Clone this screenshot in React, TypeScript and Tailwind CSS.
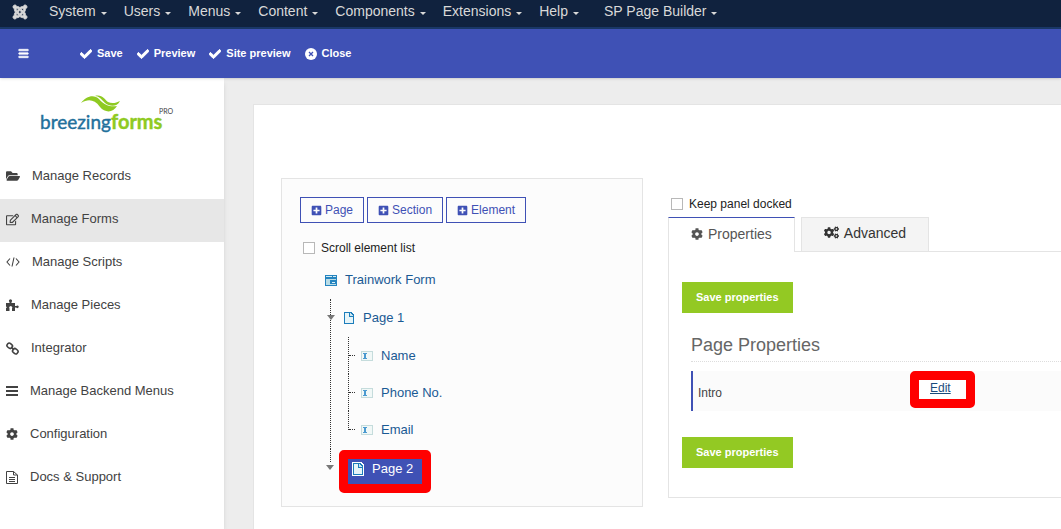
import type { ReactNode } from "react";
import {
  FaBars,
  FaCheck,
  FaCog,
  FaCogs,
  FaFolderOpen,
  FaJoomla,
  FaPlusSquare,
  FaRegEdit,
} from "react-icons/fa";

const menuItems = ["System", "Users", "Menus", "Content", "Components", "Extensions", "Help"];

function Caret() {
  return <span className="mt-1 border-x-[3px] border-t-[3px] border-x-transparent border-t-[#d9d9d9]" />;
}

function TopNav() {
  return (
    <nav className="flex h-[29px] items-start border-b-2 border-[#1a3867] bg-[#10223e] pl-3 text-sm text-[#d9d9d9]">
      <a href="#home" aria-label="Home" className="mt-1 mr-[21px]">
        <FaJoomla size={16} stroke="currentColor" strokeWidth={28} />
      </a>
      <div className="flex gap-[17px] leading-[22px]">
        {menuItems.map((item) => (
          <a key={item} href="#menu" className="flex items-center gap-[5px]">
            {item}
            <Caret />
          </a>
        ))}
        <a href="#builder" className="ml-2 flex items-center gap-[5px]">
          SP Page Builder
          <Caret />
        </a>
      </div>
    </nav>
  );
}

function CloseIcon() {
  return (
    <svg width="12" height="12" viewBox="0 0 12 12">
      <circle cx="6" cy="6" r="6" fill="#fff" />
      <path d="M4 4l4 4M8 4l-4 4" stroke="#3f51b5" strokeWidth="1.3" />
    </svg>
  );
}

function Toolbar() {
  return (
    <div className="relative z-10 flex h-[49px] items-center bg-[#3f51b5] pl-[18px] text-[11px] font-bold text-white shadow">
      <button type="button" aria-label="Toggle menu" className="mr-[51px]">
        <FaBars size={11} stroke="currentColor" strokeWidth={30} />
      </button>
      <div className="flex gap-[14px]">
        {["Save", "Preview", "Site preview"].map((label) => (
          <button key={label} type="button" className="flex items-center gap-[5px]">
            <FaCheck size={12} stroke="currentColor" strokeWidth={40} />
            {label}
          </button>
        ))}
        <button type="button" className="flex items-center gap-[5px]">
          <CloseIcon />
          Close
        </button>
      </div>
    </div>
  );
}

function Logo() {
  return (
    <svg
      viewBox="0 0 136 42"
      className="ml-[39px] h-[42px] w-[136px]"
      role="img"
      aria-label="BreezingForms Pro"
    >
      <path d="M42 8C47 1 55-1 60 4C66 11 72 12 78 11C74 18 66 18 61 12C55 4 49 4 42 8Z" fill="#8fca22" />
      <path d="M56 1C63-1 66 5 69 7C73 9 77 8 81 6C78 12 71 12 66 8C62 4 60 1 56 1Z" fill="#8fca22" />
      <text x="1" y="34" fontFamily="Lato, sans-serif" fontSize="19" fill="#22709b" stroke="#22709b" strokeWidth="0.4">
        breezing
      </text>
      <text x="72" y="34" fontFamily="Lato, sans-serif" fontSize="20" fontWeight="700" fill="#8fca22" stroke="#8fca22" strokeWidth="0.4">
        forms
      </text>
      <text x="120" y="19" fontFamily="Lato, sans-serif" fontSize="7" fill="#444">
        PRO
      </text>
    </svg>
  );
}

function CodeIcon() {
  return (
    <svg width="14" height="10" viewBox="0 0 14 10" fill="none" stroke="currentColor" strokeWidth="1.1">
      <path d="M4 1.5L1 5l3 3.5M10 1.5L13 5l-3 3.5M8 .5L6 9.5" />
    </svg>
  );
}

function PieceIcon() {
  return (
    <svg width="13" height="12" viewBox="0 0 13 12" fill="currentColor">
      <path d="M0 4h3.500V3a1.500 1.500 0 1 1 2 0v1H9v3h1.300a1.300 1.300 0 1 1 0 1.600H9V12H6V9.500a1.500 1.500 0 1 0-2.500 0V12H0V9l1-.8L0 7.500z" />
    </svg>
  );
}

function ChainIcon() {
  return (
    <svg width="13" height="13" viewBox="0 0 13 13" fill="none" stroke="currentColor" strokeWidth="1.6">
      <rect x="1" y="1.5" width="5.500" height="4.500" rx="2" transform="rotate(40 3.700 3.700)" />
      <rect x="6.500" y="7" width="5.500" height="4.500" rx="2" transform="rotate(40 9.300 9.300)" />
      <path d="M5 5l3 3" />
    </svg>
  );
}

function LinesIcon() {
  return (
    <svg width="12" height="10" viewBox="0 0 12 10" fill="currentColor">
      <path d="M0 0h12v2H0zM0 4h12v2H0zM0 8h12v2H0z" />
    </svg>
  );
}

function DocIcon() {
  return (
    <svg width="12" height="13" viewBox="0 0 12 13" fill="none" stroke="currentColor">
      <path d="M.5.5h7L11.5 4v8.500H.5zM7.500.5V4h4M3 6.500h6M3 8.500h6M3 10.500h6" />
    </svg>
  );
}

const sideItems: { label: string; icon: ReactNode; active?: boolean }[] = [
  { label: "Manage Records", icon: <FaFolderOpen size={14} /> },
  { label: "Manage Forms", icon: <FaRegEdit size={13} />, active: true },
  { label: "Manage Scripts", icon: <CodeIcon /> },
  { label: "Manage Pieces", icon: <PieceIcon /> },
  { label: "Integrator", icon: <ChainIcon /> },
  { label: "Manage Backend Menus", icon: <LinesIcon /> },
  { label: "Configuration", icon: <FaCog size={12} /> },
  { label: "Docs & Support", icon: <DocIcon /> },
];

function Sidebar() {
  return (
    <aside className="w-[224px] shrink-0 bg-white pt-[17px] shadow-md">
      <Logo />
      <nav className="mt-[19px]">
        {sideItems.map((item) => (
          <a
            key={item.label}
            href="#section"
            className={`flex h-[43px] items-center gap-3 pb-[3px] pl-1.5 text-[13px] text-[#424242] ${
              item.active ? "bg-[#e7e7e7]" : ""
            }`}
          >
            {item.icon}
            {item.label}
          </a>
        ))}
      </nav>
    </aside>
  );
}

function AddButton({ label }: { label: string }) {
  return (
    <button
      type="button"
      className="flex h-[26px] items-center gap-[3px] border border-[#3f51b5] px-[10px] text-xs text-[#3f51b5]"
    >
      <FaPlusSquare size={11} />
      {label}
    </button>
  );
}

function FormIcon() {
  return (
    <svg width="12" height="11" viewBox="0 0 12 11" shapeRendering="crispEdges">
      <path d="M0 0h12v11H0z" fill="#2584bf" />
      <path d="M1 1h6v1H1zM8 1h3v1H8z" fill="#d5edf5" />
      <path d="M1 4h10v6H1z" fill="#b9dce6" />
      <path d="M5 5h6v4H5z" fill="#2584bf" />
      <path d="M7 7h3v1H7z" fill="#d5edf5" />
    </svg>
  );
}

function PageIcon({ selected = false }: { selected?: boolean }) {
  return (
    <svg width="10" height="12" viewBox="0 0 10 12" shapeRendering="crispEdges" overflow="visible">
      {selected && <path d="M-1-1h9l3 3v11H-1z" fill="#fff" />}
      <path d="M0 0h7l3 3v9H0z" fill="#1c7dbb" />
      <path d="M1 1h4v4h4v6H1z" fill="#e6f4f8" />
      <path d="M6 1l3 3H6z" fill="#cde7f2" />
    </svg>
  );
}

function FieldIcon() {
  return (
    <svg width="12" height="10" viewBox="0 0 12 10" shapeRendering="crispEdges">
      <path d="M0 0h12v10H0z" fill="#c5dcdc" />
      <path d="M1 1h10v8H1z" fill="#f1f8f7" />
      <path d="M2 2h4v1H2zM2 7h4v1H2zM3 3h2v4H3z" fill="#4b9ad0" />
    </svg>
  );
}

function Toggle() {
  return (
    <button
      type="button"
      aria-label="Collapse"
      className="absolute top-4 -left-1 border-x-[4px] border-t-[5px] border-x-transparent border-t-[#777]"
    />
  );
}

function Highlight() {
  return <span className="pointer-events-none absolute -inset-[9px] rounded-[5px] border-[9px] border-[#f00]" />;
}

function FormTree() {
  return (
    <div className="pl-6 text-[13px] text-[#1a5a94]">
      <a href="#form" className="flex h-[38px] items-center gap-2 pl-px">
        <FormIcon />
        Trainwork Form
      </a>
      <ul className="pl-[6px]">
        <li className="relative border-l border-dotted border-[#333] pb-px pl-3">
          <Toggle />
          <a href="#page1" className="flex h-[38px] items-center gap-[9px] pl-px">
            <PageIcon />
            Page 1
          </a>
          <ul className="pl-[5px]">
            {["Name", "Phone No.", "Email"].map((name, i) => (
              <li key={name} className="flex h-[37px] gap-[6px]">
                <span className={`border-l border-dotted border-[#333] ${i === 2 ? "h-[19px]" : "h-full"}`}>
                  <span className="block h-[19px] w-[6px] border-b border-dotted border-[#333]" />
                </span>
                <a href="#element" className="flex items-center gap-2">
                  <FieldIcon />
                  {name}
                </a>
              </li>
            ))}
          </ul>
        </li>
        <li className="relative flex pb-[22px]">
          <span className="h-[13px] border-l border-dotted border-[#333]" />
          <Toggle />
          <a
            href="#page2"
            className="relative mt-[10px] ml-[17px] flex items-center gap-[9px] bg-[#3f51b5] pr-[9px] pb-[6px] pl-[5px] leading-[19px] text-white"
          >
            <PageIcon selected />
            Page 2
            <Highlight />
          </a>
        </li>
      </ul>
    </div>
  );
}

function Check({ id, label }: { id: string; label: string }) {
  return (
    <div className="flex items-center gap-[6px] text-xs text-[#222]">
      <input
        id={id}
        type="checkbox"
        className="size-3 appearance-none border border-[#b8b8b8] bg-white checked:bg-[#3f51b5]"
      />
      <label htmlFor={id}>{label}</label>
    </div>
  );
}

function ElementPanel() {
  return (
    <section className="w-[362px] shrink-0 border border-[#e4e4e4] bg-[#fcfcfc] pt-[18px] pl-[18px]">
      <div className="flex gap-[3px]">
        <AddButton label="Page" />
        <AddButton label="Section" />
        <AddButton label="Element" />
      </div>
      <div className="mt-[17px] mb-[5px] pl-[3px]">
        <Check id="scroll-list" label="Scroll element list" />
      </div>
      <FormTree />
    </section>
  );
}

function SaveButton() {
  return (
    <button type="button" className="block h-[31px] bg-[#93c923] px-[14px] text-[11px] font-bold text-white">
      Save properties
    </button>
  );
}

function PropertiesPanel() {
  return (
    <section className="min-w-0 flex-1 pt-[18px]">
      <div className="pl-[3px]">
        <Check id="keep-docked" label="Keep panel docked" />
      </div>
      <div role="tablist" className="relative mt-[5px] flex gap-[6px] text-sm">
        <button
          type="button"
          role="tab"
          aria-selected="true"
          className="-mb-px flex h-[35px] items-center gap-[5px] border border-b-0 border-[#e4e4e4] border-t-[#3f51b5] bg-white px-[22px] pb-[3px] text-[#555]"
        >
          <FaCog size={12} />
          Properties
        </button>
        <button
          type="button"
          role="tab"
          aria-selected="false"
          className="flex h-[34px] items-center gap-[5px] border border-b-0 border-[#e4e4e4] bg-[#f4f4f4] px-[22px] pb-1 text-[#333]"
        >
          <FaCogs size={15} />
          Advanced
        </button>
      </div>
      <div className="border border-r-0 border-[#e4e4e4] pt-[30px] pb-[29px] pl-[13px]">
        <SaveButton />
        <div className="mt-[18px] mb-[26px] pl-[9px]">
          <h4 className="mb-[9px] border-b border-dotted border-[#ddd] pb-[2px] text-lg text-[#666]">Page Properties</h4>
          <div className="flex h-10 border-l-2 border-[#3f51b5] bg-[#fbfbfb] text-xs text-[#444]">
            <span className="w-[226px] self-center pt-1 pl-[5px]">Intro</span>
            <a href="#edit" className="relative mt-[9px] h-[19px] bg-white pr-[15px] pl-[11px] leading-[17px] text-[#1a4b7c] underline">
              Edit
              <Highlight />
            </a>
          </div>
        </div>
        <SaveButton />
      </div>
    </section>
  );
}

export default function App() {
  return (
    <div className="flex h-screen min-w-[900px] flex-col overflow-hidden bg-[#ededed] font-['Liberation_Sans',Arial,sans-serif]">
      <TopNav />
      <Toolbar />
      <div className="flex min-h-0 flex-1">
        <Sidebar />
        <main className="min-w-0 flex-1 pt-[26px] pl-[29px]">
          <div className="flex h-full items-start gap-[25px] border-t border-l border-[#e4e4e4] bg-white pt-[73px] pl-[27px]">
            <ElementPanel />
            <PropertiesPanel />
          </div>
        </main>
      </div>
    </div>
  );
}
